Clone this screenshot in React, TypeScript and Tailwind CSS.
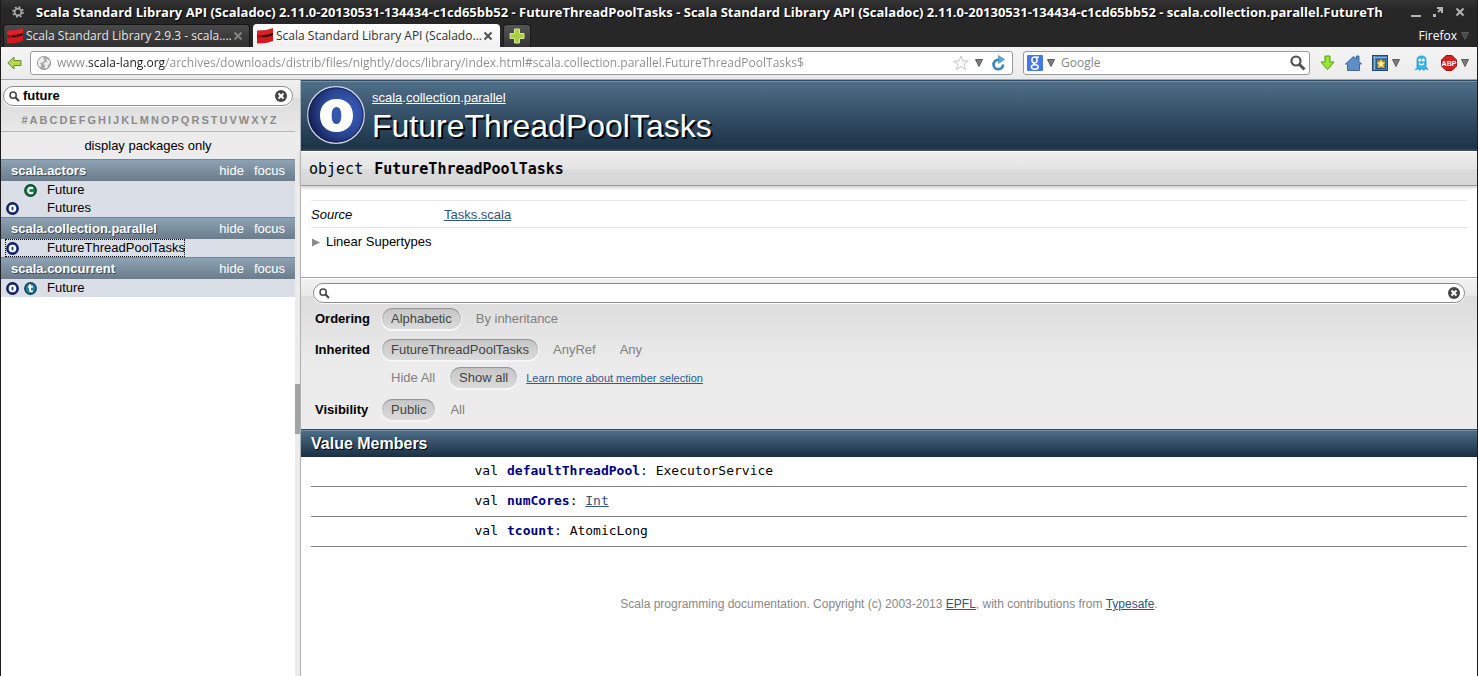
import type { ReactNode } from "react";

const UI = "font-['Open_Sans','Noto_Sans',sans-serif]";

function ScalaLogo() {
  return (
    <svg width="16" height="16" viewBox="0 0 16 16" className="shrink-0" aria-hidden="true">
      <path d="M0 2.500Q10 2.500 16 0V5.500Q10 8 0 8Z" fill="#dc2226" />
      <path d="M0 9.500Q10 9.500 16 7V13Q10 15.500 0 15.500Z" fill="#d01a20" />
      <path d="M0 7Q10 7 16 5V7.500Q10 10 0 10Z" fill="#a01216" />
      <path d="M5 7.500Q11 7.200 16 5V7Q11 9 5 9Z" fill="#2a0405" />
    </svg>
  );
}

function Caret({ dark = false }: { dark?: boolean }) {
  return (
    <svg width="8" height="8" viewBox="0 0 8 8" className="shrink-0" aria-hidden="true">
      <path d="M0.500 0.500H7.500L4 7.500Z" fill={dark ? "#4a4a4a" : "#7c7c7c"} stroke={dark ? "#5a5a5a" : "#5c5c5c"} />
    </svg>
  );
}

function CrossIcon({ color }: { color: string }) {
  return (
    <svg width="10" height="10" viewBox="0 0 10 10" aria-hidden="true">
      <path d="M1.500 1.500L8.500 8.500M8.500 1.500L1.500 8.500" stroke={color} strokeWidth="2" />
    </svg>
  );
}

function Lens({ size, color }: { size: number; color: string }) {
  return (
    <svg width={size} height={size} viewBox="0 0 16 16" className="shrink-0" aria-hidden="true">
      <circle cx="6" cy="6" r="4.500" fill="none" stroke={color} strokeWidth="2.200" />
      <path d="M9.500 9.500L14.500 14.500" stroke={color} strokeWidth="3" />
    </svg>
  );
}

function ClearIcon() {
  return (
    <svg width="12" height="12" viewBox="0 0 12 12" aria-hidden="true">
      <circle cx="6" cy="6" r="6" fill="#444" />
      <path d="M3.500 3.500L8.500 8.500M8.500 3.500L3.500 8.500" stroke="#fff" strokeWidth="2" />
    </svg>
  );
}

type Kind = "object" | "class" | "trait";

function KindIcon({ kind }: { kind: Kind }) {
  const fill = kind === "object" ? "#263f8c" : kind === "class" ? "#1c7f50" : "#2a7f9f";
  const rim = kind === "object" ? "#101c56" : kind === "class" ? "#0b4a2b" : "#10465e";
  return (
    <svg width="13" height="13" viewBox="0 0 13 13" aria-label={kind} role="img">
      <circle cx="6.500" cy="6.500" r="5.600" fill={fill} stroke={rim} strokeWidth="1.600" />
      {kind === "object" && <path fillRule="evenodd" fill="#fff" d="M6.500 2.700A3.700 3.800 0 1 0 6.500 10.300A3.700 3.800 0 1 0 6.500 2.700ZM6.500 4.600A1.100 1.900 0 1 1 6.500 8.400A1.100 1.900 0 1 1 6.500 4.600Z" />}
      {kind === "class" && <path d="M8.900 4.700A2.700 2.700 0 1 0 8.900 8.300" fill="none" stroke="#fff" strokeWidth="2" />}
      {kind === "trait" && <path d="M6 2.300V8.200Q6 9.600 8.700 9.300M4.200 4.800H8.800" fill="none" stroke="#fff" strokeWidth="1.900" />}
    </svg>
  );
}

function ObjectBadge() {
  return (
    <svg width="58" height="58" viewBox="0 0 58 58" className="shrink-0" role="img" aria-label="object">
      <defs>
        <radialGradient id="badge" cx="0.65" cy="0.45" r="0.62">
          <stop offset="0.3" stopColor="#3556ae" />
          <stop offset="0.65" stopColor="#2a4594" />
          <stop offset="1" stopColor="#17225a" />
        </radialGradient>
      </defs>
      <circle cx="29" cy="29" r="28.300" fill="url(#badge)" stroke="#d5dae4" strokeWidth="1.200" />
      <circle cx="29" cy="29" r="27" fill="none" stroke="#10194a" strokeOpacity="0.600" />
      <path fillRule="evenodd" fill="#fff" d="M29.500 13C19 13 13 20 13 29.500S19 46 29.500 46S46 39 46 29.500S40 13 29.500 13ZM29.500 21C32.800 21 34.300 24.500 34.300 29.500S32.800 38 29.500 38S24.700 34.500 24.700 29.500S26.200 21 29.500 21Z" />
    </svg>
  );
}

function Tab({ title, active = false }: { title: string; active?: boolean }) {
  return (
    <div
      className={
        active
          ? "flex h-[23px] w-[247px] items-center rounded-t-[4px] bg-gradient-to-b from-white to-[#f0f0f0] px-1 text-[#333]"
          : "flex h-[23px] w-[247px] items-center rounded-t-[4px] border border-b-0 border-[#151515] bg-gradient-to-b from-[#4a4a4a] to-[#303030] px-[3px] text-[#e4e4e4]"
      }
    >
      <ScalaLogo />
      <span className="ml-[3px] flex-1 text-[12px] leading-5 whitespace-nowrap">{title}</span>
      <button aria-label="Close tab" className="mr-[3px]">
        <CrossIcon color={active ? "#4f4f4f" : "#838383"} />
      </button>
    </div>
  );
}

function BrowserChrome() {
  return (
    <header className={UI}>
      <div className="bg-[#272727] bg-gradient-to-b from-[#343434] to-[#272727] to-20% text-white">
        <div className="flex h-6 items-center pr-3 pl-[11px]">
          <svg width="12" height="12" viewBox="0 0 12 12" className="shrink-0" aria-hidden="true">
            <circle cx="6" cy="6" r="3.400" fill="none" stroke="#a9a9a9" strokeWidth="1.800" />
            <circle cx="6" cy="6" r="5" fill="none" stroke="#a9a9a9" strokeWidth="1.600" strokeDasharray="1.960 1.960" />
          </svg>
          <p className="ml-3 min-w-0 flex-1 overflow-hidden text-[13px] leading-5 font-bold whitespace-nowrap [text-shadow:1px_1px_1px_#000]">
            Scala Standard Library API (Scaladoc) 2.11.0-20130531-134434-c1cd65bb52 - FutureThreadPoolTasks - Scala Standard Library API (Scaladoc) 2.11.0-20130531-134434-c1cd65bb52 - scala.collection.parallel.FutureTh
          </p>
          <div className="ml-4 flex shrink-0 items-center gap-3">
            <button aria-label="Minimize">
              <svg width="10" height="10" viewBox="0 0 10 10"><path d="M0 9H10" stroke="#b5b5b5" strokeWidth="2" /></svg>
            </button>
            <button aria-label="Restore">
              <svg width="10" height="10" viewBox="0 0 10 10"><path d="M4 1H9V6M9 1L5 5" fill="none" stroke="#b5b5b5" strokeWidth="2" /><path d="M0 7h3v3H0z" fill="#b5b5b5" /></svg>
            </button>
            <button aria-label="Close window"><CrossIcon color="#b5b5b5" /></button>
          </div>
        </div>
        <div className="flex h-[23px] items-end pr-2 pl-0.5">
          <Tab title="Scala Standard Library 2.9.3 - scala...." />
          <div className="ml-[3px]"><Tab active title="Scala Standard Library API (Scalado…" /></div>
          <button aria-label="New tab" className="ml-[3px] flex h-[23px] w-7 items-center justify-center rounded-t-[4px] border border-b-0 border-[#1c1c1c] bg-gradient-to-b from-[#555] to-[#363636]">
            <svg width="16" height="16" viewBox="0 0 16 16"><path d="M5.500 1H10.500V5.500H15V10.500H10.500V15H5.500V10.500H1V5.500H5.500Z" fill="#a7cf3f" stroke="#d7ea9c" /></svg>
          </button>
          <button className="ml-auto flex h-[23px] items-center gap-1 text-[12px] leading-5">
            Firefox <Caret dark />
          </button>
        </div>
      </div>
      <div className="flex h-8 items-center bg-gradient-to-b from-[#f4f4f4] to-[#ebebeb] pr-2 pl-1.5">
        <button aria-label="Back">
          <svg width="15" height="14" viewBox="0 0 15 14"><path d="M0.800 7L7 1V4.500H14V9.500H7V13Z" fill="#b5d84c" stroke="#68883a" /></svg>
        </button>
        <div className="ml-2 flex h-6 min-w-0 flex-1 items-center rounded-[3px] border border-[#9a9a9a] bg-white pr-1.5 pl-1.5">
          <svg width="14" height="14" viewBox="0 0 14 14" className="shrink-0" aria-hidden="true">
            <circle cx="7" cy="7" r="6.600" fill="#a9a9a9" stroke="#8f8f8f" strokeWidth="0.800" />
            <path d="M1 5L4 1.500L7.500 1L6 3L8 4L5.500 6.500L3 7L4.500 9.500L3 11.500L1 9ZM9 2.500L12.500 4.500L13 7L11 9.500L10 12.500L7.500 12L8 9L6.500 8L8 6H10.500Z" fill="#ededed" />
          </svg>
          <input
            aria-label="Location"
            defaultValue="www.scala-lang.org/archives/downloads/distrib/files/nightly/docs/library/index.html#scala.collection.parallel.FutureThreadPoolTasks$"
            className="ml-1.5 min-w-0 flex-1 bg-[linear-gradient(90deg,#8b8b8b_30px,#1c1c1c_30px,#1c1c1c_108px,#8b8b8b_108px)] bg-clip-text text-[12px] leading-5 text-transparent outline-none"
          />
          <button aria-label="Bookmark">
            <svg width="16" height="16" viewBox="0 0 16 16"><path d="M8 1L10 6H15.200L11 9.300L12.700 14.700L8 11.500L3.300 14.700L5 9.300L0.800 6H6Z" fill="#fff" stroke="#c4c4c4" /></svg>
          </button>
          <button aria-label="History" className="ml-1.5"><Caret /></button>
          <button aria-label="Reload" className="ml-2">
            <svg width="15" height="16" viewBox="0 0 15 16"><path d="M9 4.800H7A4.700 4.700 0 1 0 12 9.500" fill="none" stroke="#3d87bd" strokeWidth="2.800" /><path d="M7.500 0.500L13.500 4.500L7.500 8.500Z" fill="#58abd8" stroke="#3d87bd" strokeWidth="0.600" /></svg>
          </button>
        </div>
        <div className="ml-2.5 flex h-6 w-[287px] items-center rounded-[3px] border border-[#9a9a9a] bg-white px-[3px]">
          <svg width="16" height="16" viewBox="0 0 16 16" className="shrink-0" aria-hidden="true">
            <rect width="16" height="16" rx="1" fill="#4478e8" />
            <g fill="none" stroke="#fff" strokeWidth="1.500">
              <ellipse cx="7.500" cy="5" rx="2.600" ry="2.900" />
              <path d="M9 2.300H12M7.500 8Q5.500 9 8 9.800" />
              <ellipse cx="7.800" cy="12" rx="3.400" ry="2.200" />
            </g>
          </svg>
          <button aria-label="Search engine" className="ml-1"><Caret /></button>
          <input aria-label="Web search" placeholder="Google" className="ml-1.5 min-w-0 flex-1 bg-transparent text-[12px] leading-5 outline-none placeholder:text-[#858585]" />
          <button aria-label="Search"><Lens size={16} color="#505050" /></button>
        </div>
        <div className="ml-2.5 flex shrink-0 items-center">
          <button aria-label="Downloads">
            <svg width="15" height="16" viewBox="0 0 15 16"><path d="M5 1H10V7H14L7.500 14.500L1 7H5Z" fill="#98e632" stroke="#4f9e14" /></svg>
          </button>
          <button aria-label="Home" className="ml-2.5">
            <svg width="17" height="16" viewBox="0 0 17 16"><path d="M11.500 4V1H14V6.500L16.500 9H14.500V15.500H2.500V9H0.500L8.500 1.500Z" fill="#5c8fc8" stroke="#335f96" strokeWidth="0.900" /></svg>
          </button>
          <button aria-label="Bookmarks" className="ml-2.5 flex items-center gap-1">
            <svg width="16" height="16" viewBox="0 0 16 16"><rect x="0.500" y="0.500" width="15" height="15" fill="#4a7dbb" stroke="#214778" /><path d="M2.500 1V15M1 2.500H15" stroke="#86abd6" /><rect x="4.500" y="4.500" width="9" height="9" fill="#8b7f4a" stroke="#2c568c" /><path d="M9 4.500L10.200 7.300L13 7.500L10.900 9.500L11.600 12.500L9 10.900L6.400 12.500L7.100 9.500L5 7.500L7.800 7.300Z" fill="#fff3a0" stroke="#f5c531" strokeWidth="0.600" /></svg>
            <Caret />
          </button>
          <button aria-label="Ghostery" className="ml-3.5">
            <svg width="15" height="16" viewBox="0 0 15 16"><path d="M3 14V5Q3 1 7.500 1T12 5V12L14 14.500L11.500 13.800L10 15.200L7.500 13.800L5.500 15.200L4 13.800L1 14.500Z" fill="#37b5ea" stroke="#1786bd" strokeWidth="0.700" /><circle cx="5.800" cy="5" r="1.500" fill="#fff" /><circle cx="9.300" cy="5" r="1.500" fill="#fff" /><path d="M5 8.500Q7.500 11 10 8.500" fill="none" stroke="#fff" strokeWidth="1.300" /></svg>
          </button>
          <button aria-label="Adblock Plus" className="ml-3 flex items-center gap-1">
            <svg width="16" height="16" viewBox="0 0 16 16"><path d="M5 0.500H11L15.500 5V11L11 15.500H5L0.500 11V5Z" fill="#d2201c" stroke="#8f1512" /><text x="8" y="10.500" textAnchor="middle" fontSize="7" fontWeight="700" fill="#fff" fontFamily="Liberation Sans">ABP</text></svg>
            <Caret />
          </button>
        </div>
      </div>
    </header>
  );
}

type Entry = { name: string; kinds: Kind[]; selected?: boolean };

const PACKAGES: { name: string; entries: Entry[] }[] = [
  { name: "scala.actors", entries: [{ name: "Future", kinds: ["class"] }, { name: "Futures", kinds: ["object"] }] },
  { name: "scala.collection.parallel", entries: [{ name: "FutureThreadPoolTasks", kinds: ["object"], selected: true }] },
  { name: "scala.concurrent", entries: [{ name: "Future", kinds: ["object", "trait"] }] },
];

function Sidebar() {
  return (
    <aside className="flex shrink-0 bg-[#ececec] bg-[linear-gradient(#f0f0f0_0,#e6e6e6_18px,#dcdcdc_18px,#ececec_60px)]">
      <div className="flex w-[294px] flex-col">
        <div className="h-[52px] border-b border-[#b5b5b5] pt-1.5 pl-0.5">
          <div className="flex h-5 w-[290px] items-center rounded-full border border-[#8c8c8c] bg-white px-[5px] shadow-[0_1px_0_#fff]">
            <Lens size={11} color="#444" />
            <input aria-label="Filter entities" defaultValue="future" className="ml-[3px] min-w-0 flex-1 bg-transparent text-[13px] leading-4 font-bold outline-none" />
            <button aria-label="Clear filter"><ClearIcon /></button>
          </div>
          <nav aria-label="Index" className="mt-1.5 flex justify-center gap-0.5 text-[11px] leading-4 font-bold text-[#8b8b8b]">
            {"#ABCDEFGHIJKLMNOPQRSTUVWXYZ".split("").map((c) => (
              <a key={c} href={"#index-" + c}>{c}</a>
            ))}
          </nav>
        </div>
        <button className="flex h-[27px] w-full items-center justify-center bg-[#ececec] text-[13px] leading-4">display packages only</button>
        <div className="flex-1 bg-white">
          {PACKAGES.map((p) => (
            <section key={p.name}>
              <div className="flex h-[22px] items-center gap-2.5 border-t border-[#71869a] bg-gradient-to-b from-[#8da2b3] to-[#6b7d8c] px-2.5 text-[13px] leading-4 text-white">
                <a href="#package" className="mr-auto font-bold [text-shadow:1px_1px_0_#3d4a55]">{p.name}</a>
                <button>hide</button>
                <button>focus</button>
              </div>
              <ul className="bg-[#dadfe7] text-[13px] leading-[18px]">
                {p.entries.map((e) => (
                  <li key={e.name} className="flex h-[18px] pl-1">
                    <a href="#entry" className={e.selected ? "flex items-center outline-1 -outline-offset-1 outline-dotted outline-black" : "flex items-center"}>
                      <span className="flex w-[42px] items-center gap-[5px] pl-px">
                        {e.kinds[0] === "class" && <span className="w-[13px]" />}
                        {e.kinds.map((k) => <KindIcon key={k} kind={k} />)}
                      </span>
                      {e.name}
                    </a>
                  </li>
                ))}
              </ul>
            </section>
          ))}
        </div>
      </div>
      <div className="w-[6px] border-r border-[#b0b0b0] pt-[304px]">
        <div className="h-[50px] bg-[#a3a3a3]" />
      </div>
    </aside>
  );
}

function Choice({ children, on = false }: { children: ReactNode; on?: boolean }) {
  return (
    <button
      className={
        on
          ? "h-[21px] rounded-full bg-gradient-to-b from-[#c6c6c6] to-[#dadada] px-[9px] text-[#444] shadow-[inset_0_1px_1px_#8f8f8f,0_1px_0_1px_#f6f6f6]"
          : "h-[21px] px-[9px] text-[#808080]"
      }
    >
      {children}
    </button>
  );
}

function FilterRow({ label, children }: { label: string; children: ReactNode }) {
  return (
    <div className="flex h-[21px] items-center gap-1.5">
      <span className="w-[61px] font-bold">{label}</span>
      {children}
    </div>
  );
}

const MEMBERS: { name: string; type: string; link?: boolean }[] = [
  { name: "defaultThreadPool", type: "ExecutorService" },
  { name: "numCores", type: "Int", link: true },
  { name: "tcount", type: "AtomicLong" },
];

function Entity() {
  return (
    <main className="min-w-0 flex-1 bg-white">
      <div className="flex h-[71px] gap-[7px] border-t border-[#2c4a63] bg-gradient-to-b from-[#4f6f89] to-[#1a3044] pt-[5px] pl-1.5 text-white shadow-[inset_0_1px_0_#7490a8]">
        <ObjectBadge />
        <div className="pt-1">
          <p className="text-[13px] leading-4">
            <a href="#scala" className="underline">scala</a>.<a href="#collection" className="underline">collection</a>.<a href="#parallel" className="underline">parallel</a>
          </p>
          <h1 className="text-[32px] leading-10 [text-shadow:2px_2px_0_#000]">FutureThreadPoolTasks</h1>
        </div>
      </div>
      <div className="flex h-[35px] items-center gap-[11px] border-t border-b border-t-white border-b-[#999] bg-[linear-gradient(#eeeeee_0,#e4e4e4_50%,#dcdcdc_50%,#d6d6d6_100%)] pl-2 font-['DejaVu_Sans_Mono',monospace] text-[15px] leading-5 shadow-[0_1px_4px_#bbb]">
        <span>object</span>
        <strong>FutureThreadPoolTasks</strong>
      </div>
      <div className="px-2.5 pt-3.5 text-[13px] leading-4">
        <dl className="flex h-7 items-end border-y border-[#e6e6e6] pb-1">
          <dt className="w-[133px] italic">Source</dt>
          <dd><a href="#source" className="text-[#315479] underline">Tasks.scala</a></dd>
        </dl>
        <button className="mt-1.5 flex items-center gap-1.5">
          <svg width="9" height="9" viewBox="0 0 9 9" aria-hidden="true"><path d="M1 0.500L9 4.500L1 8.500Z" fill="#8c8c8c" /></svg>
          Linear Supertypes
        </button>
      </div>
      <div className="mt-[27px] h-[152px] border-t border-[#a5a5a5] bg-[#ececec] bg-[linear-gradient(#f2f2f2_0,#e8e8e8_18px,#dcdcdc_18px,#ececec_90px)] pt-[5px] text-[13px] leading-4 shadow-[inset_0_1px_0_#fff]">
        <div className="mx-3 flex h-5 items-center rounded-full border border-[#8c8c8c] bg-white pr-1 pl-[5px] shadow-[0_1px_0_#fff]">
          <Lens size={11} color="#444" />
          <input aria-label="Filter members" className="min-w-0 flex-1 bg-transparent outline-none" />
          <button aria-label="Clear member filter"><ClearIcon /></button>
        </div>
        <div className="pt-[5px] pl-3.5">
          <FilterRow label="Ordering"><Choice on>Alphabetic</Choice><Choice>By inheritance</Choice></FilterRow>
          <div className="mt-2.5"><FilterRow label="Inherited"><Choice on>FutureThreadPoolTasks</Choice><Choice>AnyRef</Choice><Choice>Any</Choice></FilterRow></div>
          <div className="mt-[7px]">
            <FilterRow label="">
              <Choice>Hide All</Choice><Choice on>Show all</Choice>
              <a href="#learn" className="ml-[3px] text-[11px] text-[#2b5a94] underline">Learn more about member selection</a>
            </FilterRow>
          </div>
          <div className="mt-[11px]"><FilterRow label="Visibility"><Choice on>Public</Choice><Choice>All</Choice></FilterRow></div>
        </div>
      </div>
      <h2 className="h-7 border-t border-[#2c4a63] bg-gradient-to-b from-[#4f6f89] to-[#1a3044] pl-2.5 text-[16px] leading-[27px] font-bold text-white shadow-[inset_0_1px_0_#7490a8] [text-shadow:1px_1px_0_#000]">Value Members</h2>
      <ol className="px-2.5 font-['DejaVu_Sans_Mono',monospace] text-[13px] leading-[29px]">
        {MEMBERS.map((m) => (
          <li key={m.name} className="flex h-[30px] border-b border-[#808080] leading-7">
            <span className="w-[196px] pr-[9px] text-right">val</span>
            <span>
              <strong className="text-[#00007f]">{m.name}</strong>: {m.link ? <a href="#int" className="text-[#315479] underline">{m.type}</a> : m.type}
            </span>
          </li>
        ))}
      </ol>
      <footer className="mt-[49px] text-center text-[12px] leading-4 text-[#888]">
        Scala programming documentation. Copyright (c) 2003-2013 <a href="#epfl" className="text-[#315479] underline">EPFL</a>, with contributions from <a href="#typesafe" className="text-[#315479] underline">Typesafe</a>.
      </footer>
    </main>
  );
}

export default function App() {
  return (
    <div className="flex min-h-screen flex-col overflow-hidden border-x border-[#1b1b1b] bg-white font-['Liberation_Sans',Arial,sans-serif] text-black">
      <BrowserChrome />
      <div className="flex flex-1 border-t border-[#a5a5a5]">
        <Sidebar />
        <Entity />
      </div>
    </div>
  );
}
